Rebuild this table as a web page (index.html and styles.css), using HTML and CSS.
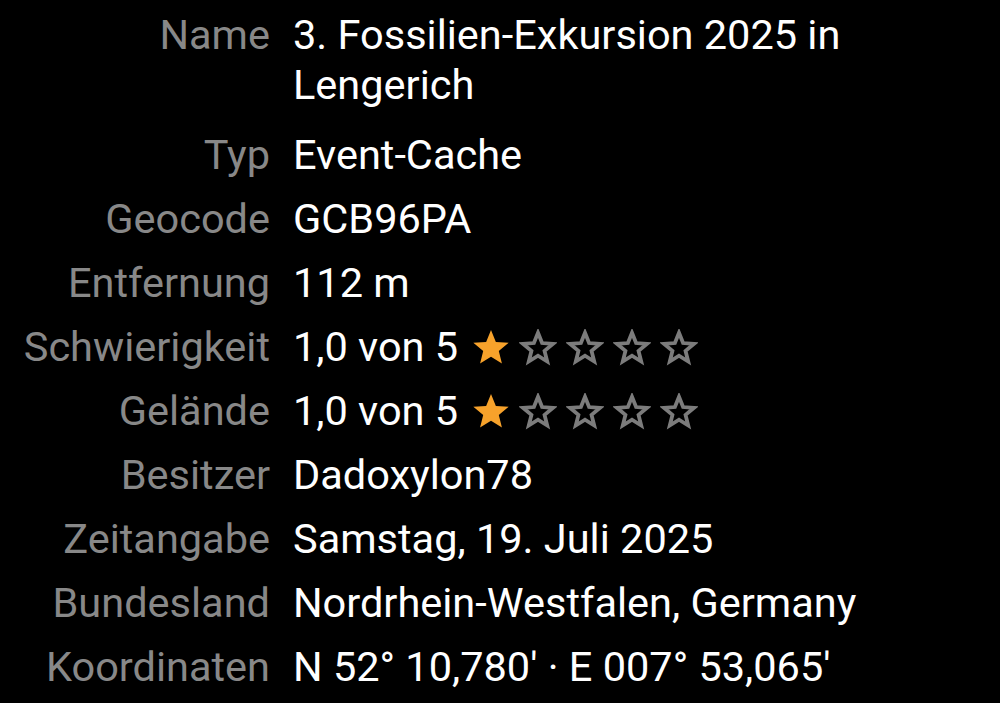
FILE: index.html
```html
<!DOCTYPE html>
<html lang="de">
  <head>
    <meta charset="UTF-8" />
    <meta name="viewport" content="width=device-width, initial-scale=1.0" />
    <title>Cache Details</title>
    <link rel="stylesheet" href="styles.css">
  </head>
  <body>
    <svg width="0" height="0" class="defs">
      <defs>
        <polygon id="star-full" points="20,1 25.1,13.6 38.6,14.5 28.2,23.2 31.5,36.4 20,29.1 8.5,36.4 11.8,23.2 1.4,14.5 14.9,13.6" />
        <polygon id="star-empty" points="20,4 24.3,14.8 35.8,15.6 26.9,23 29.7,34.2 20,28.1 10.3,34.2 13.1,23 4.2,15.6 15.7,14.8" />
      </defs>
    </svg>
    <div class="details">
      <div class="label">Name</div>
      <div class="value multi">3. Fossilien-Exkursion 2025 in Lengerich</div>

      <div class="label">Typ</div>
      <div class="value">Event-Cache</div>

      <div class="label">Geocode</div>
      <div class="value">GCB96PA</div>

      <div class="label">Entfernung</div>
      <div class="value">112 m</div>

      <div class="label">Schwierigkeit</div>
      <div class="value rating">
        <span>1,0 von 5</span>
        <span class="stars">
          <svg class="star full" viewBox="0 0 40 40"><use href="#star-full" /></svg>
          <svg class="star" viewBox="0 0 40 40"><use href="#star-empty" /></svg>
          <svg class="star" viewBox="0 0 40 40"><use href="#star-empty" /></svg>
          <svg class="star" viewBox="0 0 40 40"><use href="#star-empty" /></svg>
          <svg class="star" viewBox="0 0 40 40"><use href="#star-empty" /></svg>
        </span>
      </div>

      <div class="label">Gelände</div>
      <div class="value rating">
        <span>1,0 von 5</span>
        <span class="stars">
          <svg class="star full" viewBox="0 0 40 40"><use href="#star-full" /></svg>
          <svg class="star" viewBox="0 0 40 40"><use href="#star-empty" /></svg>
          <svg class="star" viewBox="0 0 40 40"><use href="#star-empty" /></svg>
          <svg class="star" viewBox="0 0 40 40"><use href="#star-empty" /></svg>
          <svg class="star" viewBox="0 0 40 40"><use href="#star-empty" /></svg>
        </span>
      </div>

      <div class="label">Besitzer</div>
      <div class="value">Dadoxylon78</div>

      <div class="label">Zeitangabe</div>
      <div class="value">Samstag, 19. Juli 2025</div>

      <div class="label">Bundesland</div>
      <div class="value">Nordrhein-Westfalen, Germany</div>

      <div class="label">Koordinaten</div>
      <div class="value">N 52° 10,780' · E 007° 53,065'</div>
    </div>
  </body>
</html>
```

FILE: styles.css
```css
html,
body {
  margin: 0;
  background-color: #000;
}
body {
  font-family: Roboto, "Noto Sans", sans-serif;
  font-size: 41.5px;
  line-height: 50px;
  overflow: hidden;
}
.defs {
  position: absolute;
}
.details {
  display: grid;
  grid-template-columns: 270px 1fr;
  column-gap: 23px;
  row-gap: 14px;
  padding: 10px 40px 0 0;
}
.label {
  text-align: right;
  color: #888;
  white-space: nowrap;
}
.value {
  color: #fff;
}
.value.multi {
  padding-bottom: 6px;
}
.rating {
  display: flex;
  align-items: center;
}
.stars {
  display: flex;
  gap: 9px;
  margin-left: 14px;
  padding-top: 2px;
}
.star {
  width: 38px;
  height: 38px;
  fill: none;
  stroke: #7c7c7c;
  stroke-width: 4;
}
.star.full {
  fill: #f7a22b;
  stroke: none;
}
```
